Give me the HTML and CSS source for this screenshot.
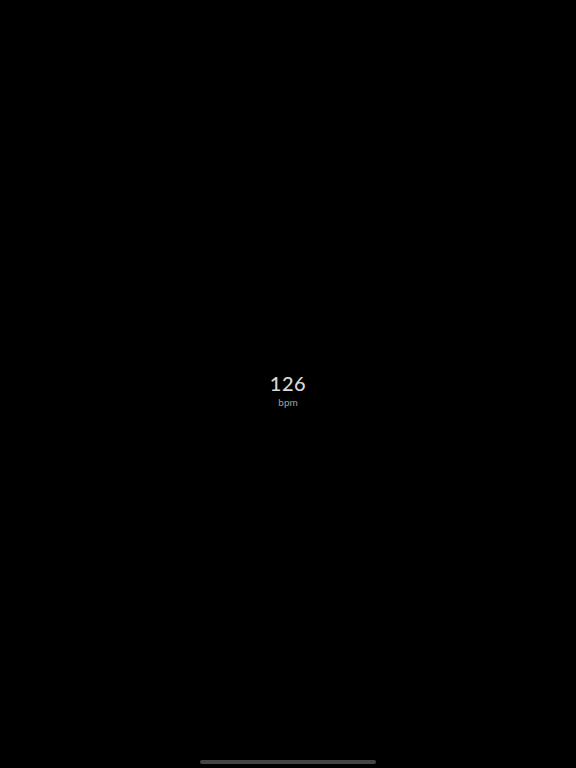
FILE: index.html
```html
<!DOCTYPE html>
<html>
<head>
<meta charset="utf-8">
<link rel="stylesheet" href="styles.css">
</head>
<body>
<div class="screen">
  <div class="center">
    <div class="bpm-value">126</div>
    <div class="bpm-unit">bpm</div>
  </div>
  <div class="home-bar"></div>
</div>
</body>
</html>
```
FILE: styles.css
```css
html, body {
  margin: 0;
  padding: 0;
  background: #000;
}
.screen {
  width: 576px;
  height: 768px;
  display: flex;
  flex-direction: column;
  align-items: center;
  font-family: "Lato", "Noto Sans", sans-serif;
}
.center {
  flex: 1;
  display: flex;
  flex-direction: column;
  align-items: center;
  justify-content: center;
  padding-top: 18px;
}
.bpm-value {
  color: #d8d8d8;
  font-size: 20px;
  font-weight: 500;
  line-height: 24px;
  letter-spacing: 0.5px;
}
.bpm-unit {
  color: #a0a0a0;
  font-size: 10px;
  line-height: 12px;
  margin-top: 1px;
}
.home-bar {
  width: 176px;
  height: 4px;
  border-radius: 2px;
  background: #444;
  margin-bottom: 4px;
}
```
